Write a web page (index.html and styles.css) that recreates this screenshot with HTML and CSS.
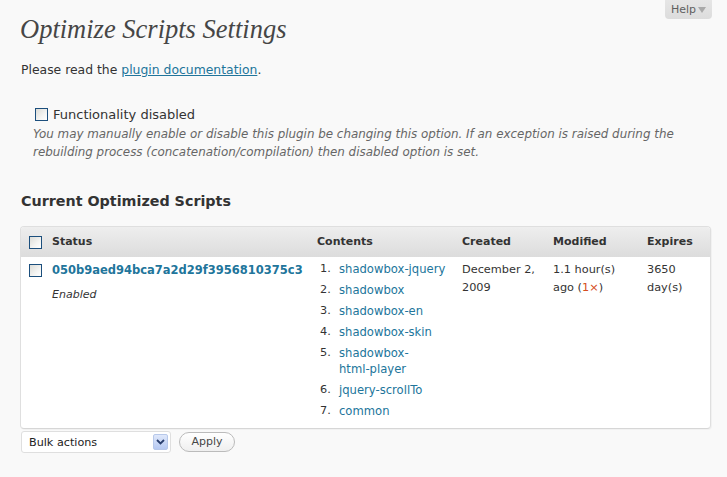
FILE: index.html
```html
<!DOCTYPE html>
<html>
<head>
<meta charset="utf-8">
<title>Optimize Scripts Settings</title>
<link rel="stylesheet" href="styles.css">
</head>
<body>
<div class="help-tab">Help<span class="tri"></span></div>
<div class="wrap">
  <h2 class="page-title">Optimize Scripts Settings</h2>
  <p class="intro">Please read the <a href="#">plugin documentation</a>.</p>
  <div class="option">
    <label class="opt-label"><input type="checkbox" class="cb"> Functionality disabled</label>
    <p class="desc">You may manually enable or disable this plugin be changing this option. If an exception is raised during the rebuilding process (concatenation/compilation) then disabled option is set.</p>
  </div>
  <h3 class="section-title">Current Optimized Scripts</h3>
  <div class="table-box">
    <table class="scripts">
      <colgroup>
        <col class="c-cb"><col class="c-status"><col class="c-contents"><col class="c-created"><col class="c-modified"><col class="c-expires">
      </colgroup>
      <thead>
        <tr>
          <th class="cbcell"><input type="checkbox" class="cb"></th>
          <th>Status</th>
          <th>Contents</th>
          <th>Created</th>
          <th>Modified</th>
          <th>Expires</th>
        </tr>
      </thead>
      <tbody>
        <tr>
          <td class="cbcell"><input type="checkbox" class="cb"></td>
          <td>
            <a class="hash" href="#">050b9aed94bca7a2d29f3956810375c3</a>
            <div class="state">Enabled</div>
          </td>
          <td>
            <ol class="files">
              <li><span class="num">1.</span><a href="#">shadowbox-jquery</a></li>
              <li><span class="num">2.</span><a href="#">shadowbox</a></li>
              <li><span class="num">3.</span><a href="#">shadowbox-en</a></li>
              <li><span class="num">4.</span><a href="#">shadowbox-skin</a></li>
              <li><span class="num">5.</span><a href="#">shadowbox-<span class="nowrap">html-player</span></a></li>
              <li><span class="num">6.</span><a href="#">jquery-scrollTo</a></li>
              <li><span class="num">7.</span><a href="#">common</a></li>
            </ol>
          </td>
          <td class="txt">December 2, 2009</td>
          <td class="txt">1.1 hour(s) ago (<span class="count">1×</span>)</td>
          <td class="txt">3650 day(s)</td>
        </tr>
      </tbody>
    </table>
  </div>
  <div class="actions">
    <div class="select">
      <span class="sel-text">Bulk actions</span>
      <span class="sel-btn"><svg width="9" height="6" viewBox="0 0 9 6"><path d="M1 1 L4.5 4.5 L8 1" fill="none" stroke="#2a3f6e" stroke-width="1.8"/></svg></span>
    </div>
    <button class="apply" type="button">Apply</button>
  </div>
</div>
</body>
</html>
```

FILE: styles.css
```css
html, body {
  margin: 0;
  padding: 0;
}
body {
  background: #f9f9f9;
  font-family: "DejaVu Sans", Verdana, sans-serif;
  font-size: 12px;
  color: #333;
}
a {
  color: #21759b;
  text-decoration: none;
}

.help-tab {
  float: right;
  margin-right: 15px;
  width: 47px;
  height: 19px;
  box-sizing: border-box;
  padding-left: 6px;
  background: linear-gradient(#e6e6e6, #dcdcdc);
  border-radius: 0 0 4px 4px;
  font-size: 11px;
  line-height: 19px;
  color: #5f5f5f;
  display: flex;
  align-items: center;
}
.help-tab .tri {
  width: 0;
  height: 0;
  margin-left: 2px;
  margin-top: 1px;
  border-left: 4px solid transparent;
  border-right: 4px solid transparent;
  border-top: 6px solid #a9a9a9;
}

.wrap {
  padding: 0 16px 0 20px;
}

.page-title {
  margin: 15px 0 0 0;
  font-family: "Liberation Serif", "Times New Roman", serif;
  font-style: italic;
  font-weight: normal;
  font-size: 26.5px;
  line-height: 29px;
  color: #464646;
}

.intro {
  margin: 17px 0 0 1px;
  font-size: 12.4px;
  line-height: 18px;
  color: #333;
}
.intro a {
  text-decoration: underline;
}

.option {
  margin-top: 26px;
  padding-left: 13px;
}
.opt-label {
  display: flex;
  align-items: center;
  height: 18px;
  font-size: 13px;
  color: #333;
}
.cb {
  -webkit-appearance: none;
  appearance: none;
  width: 13px;
  height: 13px;
  margin: 0;
  box-sizing: border-box;
  border: 1px solid #1c4f7d;
  background: linear-gradient(135deg, #dcdcd7 0%, #f4f4f2 60%, #ffffff 100%);
  display: block;
}
.opt-label .cb {
  margin: 1px 5px 0 2px;
}
.desc {
  margin: 2px 0 0 0;
  font-size: 11.9px;
  line-height: 18px;
  font-style: italic;
  color: #666;
}

.section-title {
  margin: 30px 0 0 1px;
  font-size: 14.3px;
  line-height: 20px;
  font-weight: bold;
  color: #333;
}

.table-box {
  margin-top: 15px;
  border: 1px solid #dfdfdf;
  border-bottom-color: #d6d6d6;
  border-radius: 4px;
  overflow: hidden;
  background: #fff;
  box-shadow: 1px 1px 0 rgba(0,0,0,0.03);
}
.scripts {
  width: 100%;
  border-collapse: collapse;
  table-layout: fixed;
}
.c-cb { width: 24px; }
.c-status { width: 265px; }
.c-contents { width: 145px; }
.c-created { width: 91px; }
.c-modified { width: 94px; }
.c-expires { width: 70px; }

.scripts th {
  text-align: left;
  font-size: 11px;
  font-weight: bold;
  line-height: 16px;
  color: #333;
  padding: 7px 7px 7px 7px;
  background: linear-gradient(#eeeeee, #dcdcdc);
}
.scripts th.cbcell,
.scripts td.cbcell {
  padding-left: 8px;
  padding-right: 0;
}
.scripts th.cbcell .cb {
  margin-top: 0;
}
.scripts td {
  vertical-align: top;
  font-size: 11.3px;
  line-height: 18px;
  padding: 4px 7px 9px 7px;
}
.scripts td.cbcell .cb {
  margin-top: 3px;
}
.hash {
  display: block;
  font-weight: bold;
  font-size: 11.5px;
  line-height: 18px;
}
.state {
  margin-top: 8px;
  font-size: 11px;
  font-style: italic;
  line-height: 16px;
  color: #333;
}
.files {
  list-style: none;
  margin: 0;
  padding: 0 0 0 3px;
}
.files li {
  display: flex;
  font-size: 11.6px;
  line-height: 16px;
  margin-bottom: 5px;
}
.files li:last-child {
  margin-bottom: 0;
}
.files .num {
  flex: 0 0 19px;
  font-size: 11.3px;
  color: #333;
}
.files a {
  min-width: 0;
}
.nowrap {
  white-space: nowrap;
}
.txt {
  color: #333;
}
.count {
  color: #d54e21;
}

.actions {
  display: flex;
  align-items: center;
  margin-top: 2px;
  padding-left: 1px;
}
.select {
  box-sizing: border-box;
  width: 150px;
  height: 22px;
  border: 1px solid #dfdfdf;
  border-radius: 3px;
  background: #fff;
  display: flex;
  align-items: center;
  justify-content: space-between;
  padding: 0 2px 0 7px;
  font-size: 11.2px;
  color: #222;
}
.sel-btn {
  width: 15px;
  height: 16px;
  box-sizing: border-box;
  border: 1px solid #b7c8ea;
  border-radius: 2px;
  background: linear-gradient(#dfe8fb, #b6c9f2);
  display: flex;
  align-items: center;
  justify-content: center;
}
.apply {
  margin-left: 8px;
  width: 56px;
  height: 20px;
  box-sizing: border-box;
  border: 1px solid #bbb;
  border-radius: 11px;
  background: linear-gradient(#ffffff, #efefef);
  font-family: "DejaVu Sans", Verdana, sans-serif;
  font-size: 11px;
  color: #464646;
  padding: 0;
  line-height: 18px;
}
```
